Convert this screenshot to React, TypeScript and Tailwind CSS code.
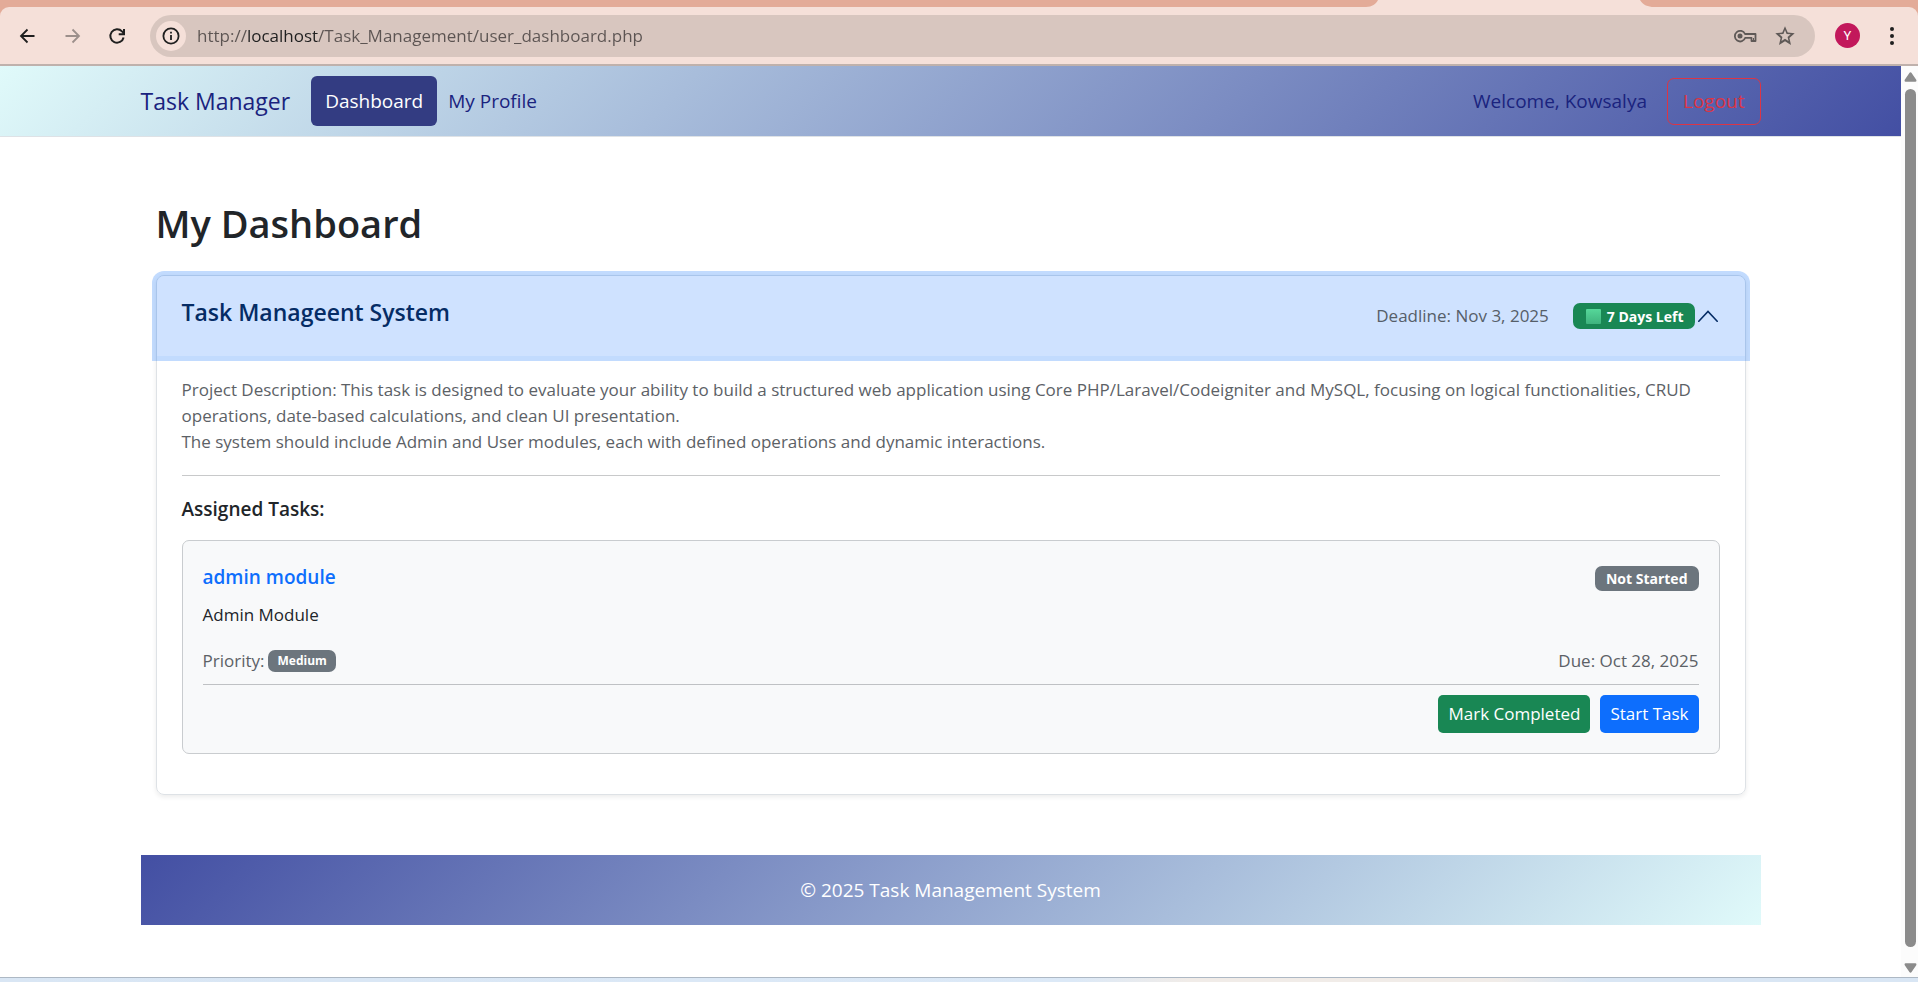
import React, { useState } from "react";

function BrowserBar() {
  return (
    <header className="shrink-0 bg-[#e3ab98]">
      <div className="flex h-[7px] justify-end">
        <svg className="mr-[254px] h-[7px] w-[298px]" viewBox="0 0 298 7" aria-hidden="true">
          <path d="M0 7C6 7 10 4 12 0H274C277 5 282 7 288 7Z" fill="#f5e0d9" />
        </svg>
      </div>
      <div className="flex h-[59px] items-center rounded-t-[9px] border-b-2 border-[#bfb1ac] bg-[#f5e0d9] pl-4 pr-[14px]">
        <button type="button" aria-label="Back" className="flex w-6 justify-center">
          <svg width="24" height="24" viewBox="0 0 24 24" fill="none" stroke="#1f1f1f" strokeWidth="1.800">
            <path d="M18.500 12H5.500M11.500 5.500L5 12L11.500 18.500" />
          </svg>
        </button>
        <button type="button" aria-label="Forward" className="ml-5 flex w-6 justify-center">
          <svg width="24" height="24" viewBox="0 0 24 24" fill="none" stroke="#9c8f8b" strokeWidth="1.800">
            <path d="M5.500 12H18.500M12.500 5.500L19 12L12.500 18.500" />
          </svg>
        </button>
        <button type="button" aria-label="Reload" className="ml-[21px] flex w-6 justify-center">
          <svg width="24" height="24" viewBox="0 0 24 24" fill="none" stroke="#1f1f1f" strokeWidth="2">
            <path d="M18.600 13.500A6.700 6.700 0 1 1 17 7.400L19 9.400M19 5V10.300H13.700" />
          </svg>
        </button>
        <div className="ml-[21px] flex h-[42px] flex-1 items-center rounded-full bg-[#d8c6bf] pl-1.5 pr-[18px]">
          <button type="button" aria-label="Site information" className="flex size-[30px] items-center justify-center rounded-full bg-[#f5e0d9]">
            <svg width="18" height="18" viewBox="0 0 18 18" fill="none" stroke="#1f1f1f" strokeWidth="1.800">
              <circle cx="9" cy="9" r="7.600" />
              <path d="M9 8V13M9 4.800V6.600" />
            </svg>
          </button>
          <input
            aria-label="Address"
            defaultValue="http://localhost/Task_Management/user_dashboard.php"
            className="ml-[11px] min-w-0 flex-1 bg-[linear-gradient(90deg,#5c5452_50px,#1f1f1f_50px,#1f1f1f_121px,#5c5452_121px)] bg-clip-text text-[17px] text-transparent outline-none"
          />
          <button type="button" aria-label="Passwords">
            <svg width="24" height="24" viewBox="0 0 24 24" fill="none" stroke="#5f5957" strokeWidth="1.800">
              <path d="M12 10H22.500V17H18.500V13.800H12.200A5.300 5.300 0 1 1 12 10Z" strokeLinejoin="round" />
              <circle cx="7" cy="12" r="2.500" fill="#5f5957" stroke="none" />
              <path d="M20.500 14V17" strokeWidth="1" />
            </svg>
          </button>
          <button type="button" aria-label="Bookmark" className="ml-4">
            <svg width="24" height="24" viewBox="0 0 24 24" fill="#5f5957">
              <path d="m8.500 17 3.500-2.200 3.500 2.200-.9-4 3.100-2.800-4.100-.3L12 6.100l-1.600 3.800-4.100.3 3.100 2.800ZM6 21l1.600-7L2.300 9.200l7-.6L12 2.200l2.700 6.400 7 .6L16.400 14 18 21l-6-3.700Z" />
            </svg>
          </button>
        </div>
        <button type="button" aria-label="Profile" className="ml-5 flex size-[25px] items-center justify-center rounded-full bg-[#c2185b] font-['Roboto',sans-serif] text-[13px] text-white">
          Y
        </button>
        <button type="button" aria-label="Browser menu" className="ml-5 flex w-6 justify-center">
          <svg width="24" height="24" viewBox="0 0 24 24" fill="#1f1f1f">
            <circle cx="12" cy="5" r="2" />
            <circle cx="12" cy="12" r="2" />
            <circle cx="12" cy="19" r="2" />
          </svg>
        </button>
      </div>
    </header>
  );
}

function ScrollTrack() {
  return (
    <div className="flex w-[17px] shrink-0 flex-col items-center bg-[#fcfcfc] pb-1 pt-1.5 pl-[2px]" aria-hidden="true">
      <svg width="13" height="10" viewBox="0 0 13 10" fill="#8b8b8b">
        <path d="M6.500 0.300Q7.200 0.300 7.600 1L12.400 8Q12.800 9.500 11.500 9.700H1.500Q0.200 9.500 0.600 8L5.400 1Q5.800 0.300 6.500 0.300Z" />
      </svg>
      <div className="mb-4 mt-[7px] w-[11px] flex-1 rounded-full bg-[#8b8b8b]" />
      <svg width="13" height="10" viewBox="0 0 13 10" fill="#8b8b8b">
        <path d="M6.500 9.700Q5.800 9.700 5.400 9L0.600 2Q0.200 0.500 1.500 0.300H11.500Q12.800 0.500 12.400 2L7.600 9Q7.200 9.700 6.500 9.700Z" />
      </svg>
    </div>
  );
}

function NavBar() {
  return (
    <nav className="border-b border-[#dee2e6] bg-[linear-gradient(135deg,#e0fafa,#434fa3)] text-[#1a237e]">
      <div className="mx-auto flex h-[70px] max-w-[1620px] items-center">
        <a href="#home" className="text-[23px]">Task Manager</a>
        <a href="#dashboard" className="ml-[21px] flex h-[50px] items-center rounded-[6px] bg-[#333c82] px-3.5 text-[19px] text-white">
          Dashboard
        </a>
        <a href="#profile" className="ml-[11px] text-[19px]">My Profile</a>
        <span className="ml-auto text-[19px]">Welcome, Kowsalya</span>
        <a href="#logout" className="ml-5 flex h-[47px] items-center rounded-[7px] border border-[#dc3545] px-[15px] text-[19px] text-[#dc3545]">
          Logout
        </a>
      </div>
    </nav>
  );
}

function TaskCard() {
  return (
    <article className="rounded-[7px] border border-[#c9cccf] bg-[#f8f9fa] p-5">
      <div className="flex items-start justify-between">
        <h3 className="pt-1 text-[19px] leading-6 font-semibold text-[#0d6efd]">admin module</h3>
        <span className="mt-[5px] flex h-[25px] items-center rounded-[7px] bg-[#6c757d] px-[11px] text-[14px] font-bold text-white">
          Not Started
        </span>
      </div>
      <p className="mt-[11px] text-[17px] leading-[26px]">Admin Module</p>
      <div className="mt-5 flex items-center justify-between text-[17px] leading-[26px] text-[#5c6166]">
        <span className="flex items-center gap-1">
          Priority:
          <span className="flex h-[22px] items-center rounded-[7px] bg-[#6c757d] px-[9px] text-[12px] font-bold text-white">
            Medium
          </span>
        </span>
        <span>Due: Oct 28, 2025</span>
      </div>
      <hr className="mt-2.5 border-[#bfc1c4]" />
      <div className="mt-2.5 flex justify-end gap-2.5">
        <button type="button" className="h-[38px] rounded-[5px] bg-[#198754] px-2.5 text-[17px] text-white">
          Mark Completed
        </button>
        <button type="button" className="h-[38px] rounded-[5px] bg-[#0d6efd] px-2.5 text-[17px] text-white">
          Start Task
        </button>
      </div>
    </article>
  );
}

function ProjectPanel() {
  const [open, setOpen] = useState(true);
  return (
    <section className="rounded-[8px] border border-[#dee2e6] shadow-[0_2px_5px_rgba(0,0,0,0.08)]">
      <h2>
        <button
          type="button"
          aria-expanded={open}
          aria-controls="project-body"
          onClick={() => setOpen(!open)}
          className="flex h-20 w-full items-center rounded-t-[7px] bg-[#cfe2ff] pl-[25px] pr-[27px] text-left shadow-[0_0_0_5px_rgba(13,110,253,0.25)]"
        >
          <span className="pb-2 text-[23px] leading-8 font-semibold text-[#052c65]">Task Manageent System</span>
          <span className="ml-auto text-[17px] text-[#565e69]">Deadline: Nov 3, 2025</span>
          <span className="ml-6 flex h-[26px] items-center gap-1.5 rounded-[7px] bg-[#198754] pl-[13px] pr-[11px] text-[14px] font-bold text-white">
            <span className="size-[15px] rounded-[1px] bg-linear-to-b from-[#56d799] to-[#3fb37e]" />
            7 Days Left
          </span>
          <svg className="ml-[3px]" width="20" height="12" viewBox="0 0 20 12" fill="none" stroke="#052c65" strokeWidth="1.600" strokeLinecap="round">
            <path d="M0.800 11.200L10 1.500L19.200 11.200" />
          </svg>
        </button>
      </h2>
      {open && (
        <div id="project-body" className="px-[25px] pb-10 pt-[21px]">
          <p className="text-[17px] leading-[26px] text-[#5c6166]">
            Project Description: This task is designed to evaluate your ability to build a structured web application using Core PHP/Laravel/Codeigniter and MySQL, focusing on logical functionalities, CRUD operations, date-based calculations, and clean UI presentation.
            <br />
            The system should include Admin and User modules, each with defined operations and dynamic interactions.
          </p>
          <hr className="my-5 border-[#c8c9ca]" />
          <h3 className="mb-[18px] text-[19px] leading-[26px] font-semibold">Assigned Tasks:</h3>
          <TaskCard />
        </div>
      )}
    </section>
  );
}

export default function App() {
  return (
    <div className="flex h-screen flex-col bg-white font-['Open_Sans','Noto_Sans',sans-serif] text-[#212529]">
      <BrowserBar />
      <div className="flex min-h-0 flex-1">
        <div className="min-w-0 flex-1 overflow-hidden">
          <NavBar />
          <div className="mx-auto max-w-[1620px]">
            <main className="px-[15px] pt-[62px]">
              <h1 className="mb-7 text-[38px] leading-12 font-semibold">My Dashboard</h1>
              <ProjectPanel />
            </main>
            <footer className="mt-[60px] flex h-[70px] items-center justify-center bg-[linear-gradient(135deg,#434fa3,#e0fafa)] text-[19px] text-white">
              © 2025 Task Management System
            </footer>
          </div>
        </div>
        <ScrollTrack />
      </div>
      <div className="h-[5px] shrink-0 border-t border-[#adb8c4] bg-[linear-gradient(90deg,#d9e6f4_0%,#dce9f7_56%,#f1ece8_62%,#f1ece8_78%,#d9e6f4_83%,#d9e6f4_100%)]" />
    </div>
  );
}
